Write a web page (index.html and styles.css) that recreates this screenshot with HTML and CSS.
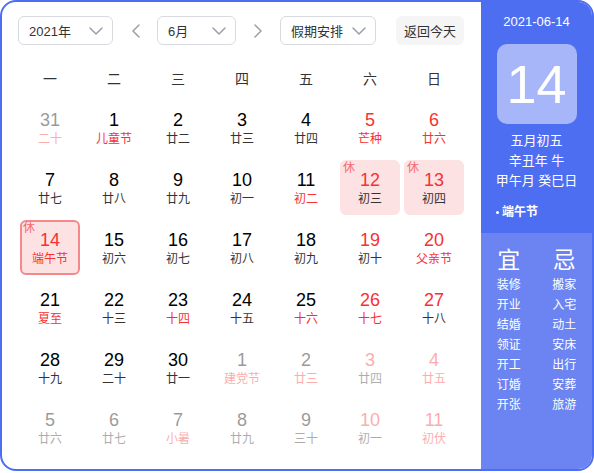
FILE: index.html
```html
<!DOCTYPE html>
<html lang="zh">
<head>
<meta charset="utf-8">
<link rel="stylesheet" href="styles.css">
</head>
<body>
<div class="cal">
  <div class="main">
    <div class="toolbar">
      <div class="select sel-year"><span>2021年</span><svg class="chev" width="14" height="8" viewBox="0 0 14 8"><polyline points="1,1 7,7 13,1"/></svg></div>
      <div class="nav"><svg width="9" height="14" viewBox="0 0 9 14"><polyline points="8,1 2,7 8,13"/></svg></div>
      <div class="select sel-month"><span>6月</span><svg class="chev" width="14" height="8" viewBox="0 0 14 8"><polyline points="1,1 7,7 13,1"/></svg></div>
      <div class="nav"><svg width="9" height="14" viewBox="0 0 9 14"><polyline points="1,1 7,7 1,13"/></svg></div>
      <div class="select sel-holiday"><span>假期安排</span><svg class="chev" width="14" height="8" viewBox="0 0 14 8"><polyline points="1,1 7,7 13,1"/></svg></div>
      <div class="today">返回今天</div>
    </div>
    <div class="weekdays">
      <div>一</div><div>二</div><div>三</div><div>四</div><div>五</div><div>六</div><div>日</div>
    </div>
    <div class="grid">
      <div class="day other"><div class="num">31</div><div class="lunar lred">二十</div></div>
      <div class="day"><div class="num">1</div><div class="lunar lred">儿童节</div></div>
      <div class="day"><div class="num">2</div><div class="lunar">廿二</div></div>
      <div class="day"><div class="num">3</div><div class="lunar">廿三</div></div>
      <div class="day"><div class="num">4</div><div class="lunar">廿四</div></div>
      <div class="day"><div class="num red">5</div><div class="lunar lred">芒种</div></div>
      <div class="day"><div class="num red">6</div><div class="lunar lred">廿六</div></div>

      <div class="day"><div class="num">7</div><div class="lunar">廿七</div></div>
      <div class="day"><div class="num">8</div><div class="lunar">廿八</div></div>
      <div class="day"><div class="num">9</div><div class="lunar">廿九</div></div>
      <div class="day"><div class="num">10</div><div class="lunar">初一</div></div>
      <div class="day"><div class="num">11</div><div class="lunar lred">初二</div></div>
      <div class="day rest"><span class="xiu">休</span><div class="num red">12</div><div class="lunar">初三</div></div>
      <div class="day rest"><span class="xiu">休</span><div class="num red">13</div><div class="lunar">初四</div></div>

      <div class="day rest selected"><span class="xiu">休</span><div class="num red">14</div><div class="lunar lred">端午节</div></div>
      <div class="day"><div class="num">15</div><div class="lunar">初六</div></div>
      <div class="day"><div class="num">16</div><div class="lunar">初七</div></div>
      <div class="day"><div class="num">17</div><div class="lunar">初八</div></div>
      <div class="day"><div class="num">18</div><div class="lunar">初九</div></div>
      <div class="day"><div class="num red">19</div><div class="lunar">初十</div></div>
      <div class="day"><div class="num red">20</div><div class="lunar lred">父亲节</div></div>

      <div class="day"><div class="num">21</div><div class="lunar lred">夏至</div></div>
      <div class="day"><div class="num">22</div><div class="lunar">十三</div></div>
      <div class="day"><div class="num">23</div><div class="lunar lred">十四</div></div>
      <div class="day"><div class="num">24</div><div class="lunar">十五</div></div>
      <div class="day"><div class="num">25</div><div class="lunar lred">十六</div></div>
      <div class="day"><div class="num red">26</div><div class="lunar lred">十七</div></div>
      <div class="day"><div class="num red">27</div><div class="lunar">十八</div></div>

      <div class="day"><div class="num">28</div><div class="lunar">十九</div></div>
      <div class="day"><div class="num">29</div><div class="lunar">二十</div></div>
      <div class="day"><div class="num">30</div><div class="lunar">廿一</div></div>
      <div class="day other"><div class="num">1</div><div class="lunar lred">建党节</div></div>
      <div class="day other"><div class="num">2</div><div class="lunar lred">廿三</div></div>
      <div class="day other"><div class="num red">3</div><div class="lunar">廿四</div></div>
      <div class="day other"><div class="num red">4</div><div class="lunar lred">廿五</div></div>

      <div class="day other"><div class="num">5</div><div class="lunar">廿六</div></div>
      <div class="day other"><div class="num">6</div><div class="lunar">廿七</div></div>
      <div class="day other"><div class="num">7</div><div class="lunar lred">小暑</div></div>
      <div class="day other"><div class="num">8</div><div class="lunar">廿九</div></div>
      <div class="day other"><div class="num">9</div><div class="lunar">三十</div></div>
      <div class="day other"><div class="num red">10</div><div class="lunar">初一</div></div>
      <div class="day other"><div class="num red">11</div><div class="lunar lred">初伏</div></div>
    </div>
  </div>
  <aside class="side">
    <div class="side-top">
      <div class="side-date">2021-06-14</div>
      <div class="side-big">14</div>
      <div class="side-lunar">
        <div>五月初五</div>
        <div>辛丑年 牛</div>
        <div>甲午月 癸巳日</div>
      </div>
      <div class="side-fest"><span class="dot"></span>端午节</div>
    </div>
    <div class="side-bottom">
      <div class="yj">
        <div class="yj-head">宜</div>
        <div class="yj-head">忌</div>
        <div>装修</div><div>搬家</div>
        <div>开业</div><div>入宅</div>
        <div>结婚</div><div>动土</div>
        <div>领证</div><div>安床</div>
        <div>开工</div><div>出行</div>
        <div>订婚</div><div>安葬</div>
        <div>开张</div><div>旅游</div>
      </div>
    </div>
  </aside>
</div>
</body>
</html>
```

FILE: styles.css
```css
* { box-sizing: border-box; }
html, body { margin: 0; padding: 0; background: #fff; }
body {
  font-family: "Liberation Sans", Arial, "Noto Sans CJK SC", sans-serif;
  color: #333;
}
.cal {
  width: 594px;
  height: 471px;
  border: 2px solid #4e6ef2;
  border-radius: 16px;
  overflow: hidden;
  display: flex;
  background: #fff;
}
.main {
  width: 479px;
  padding: 14px 0 0 16px;
}
.toolbar {
  display: flex;
  align-items: center;
  height: 29px;
}
.select {
  height: 29px;
  border: 1px solid #d8dae0;
  border-radius: 6px;
  display: flex;
  align-items: center;
  justify-content: space-between;
  padding: 0 9px 0 10px;
  font-size: 13px;
  color: #333;
}
.select span { font-family: "Liberation Sans", "Noto Sans CJK SC", sans-serif; }
.chev polyline, .nav polyline {
  fill: none;
  stroke: #9aa0a8;
  stroke-width: 1.5;
  stroke-linecap: round;
  stroke-linejoin: round;
}
.sel-year { width: 95px; }
.sel-month { width: 79px; }
.sel-holiday { width: 96px; }
.nav {
  width: 44px;
  display: flex;
  justify-content: center;
  align-items: center;
}
.today {
  margin-left: 20px;
  width: 68px;
  height: 29px;
  border-radius: 6px;
  background: #f5f5f6;
  font-size: 13px;
  color: #333;
  display: flex;
  align-items: center;
  justify-content: center;
}
.weekdays {
  margin-top: 13px;
  height: 40px;
  display: grid;
  grid-template-columns: repeat(7, 64px);
  align-items: center;
  text-align: center;
  font-size: 14px;
  color: #333;
}
.grid {
  display: grid;
  grid-template-columns: repeat(7, 64px);
  grid-auto-rows: 60px;
}
.day {
  position: relative;
  margin: 2px;
  height: 55px;
  border-radius: 6px;
  text-align: center;
  padding-top: 9px;
}
.num {
  font-size: 18px;
  line-height: 22px;
  color: #000;
}
.num.red { color: #f73131; }
.lunar {
  font-size: 12px;
  line-height: 14px;
  margin-top: 1px;
  color: #333;
}
.lunar.lred { color: #f73131; }
.other { opacity: 0.4; }
.rest { background: #fde2e3; }
.selected {
  border: 2px solid #f28a8c;
  padding-top: 7px;
}
.xiu {
  position: absolute;
  top: 1px;
  left: 3px;
  font-size: 12px;
  line-height: 14px;
  color: #f46b70;
}
.selected .xiu { top: -1px; left: 1px; }
.side {
  width: 111px;
  display: flex;
  flex-direction: column;
  color: #fff;
}
.side-top {
  background: #4e6ef2;
  height: 231px;
  padding-top: 10px;
  text-align: center;
}
.side-date {
  font-size: 13px;
  line-height: 20px;
}
.side-big {
  width: 80px;
  height: 80px;
  margin: 12px auto 0;
  border-radius: 10px;
  background: #a6b6f8;
  font-size: 54px;
  line-height: 80px;
  color: #fff;
}
.side-lunar {
  margin-top: 7px;
  font-size: 13px;
  line-height: 20px;
}
.side-fest {
  margin-top: 11px;
  padding-left: 15px;
  text-align: left;
  font-size: 12px;
  line-height: 20px;
  font-weight: bold;
  display: flex;
  align-items: center;
}
.dot {
  width: 3px;
  height: 3px;
  border-radius: 50%;
  background: #fff;
  margin-right: 3px;
}
.side-bottom {
  flex: 1;
  background: #6b84f1;
  padding-top: 12px;
}
.yj {
  display: grid;
  grid-template-columns: 1fr 1fr;
  text-align: center;
  font-size: 12px;
  line-height: 20px;
}
.yj .yj-head {
  font-size: 23px;
  line-height: 30px;
}
```
